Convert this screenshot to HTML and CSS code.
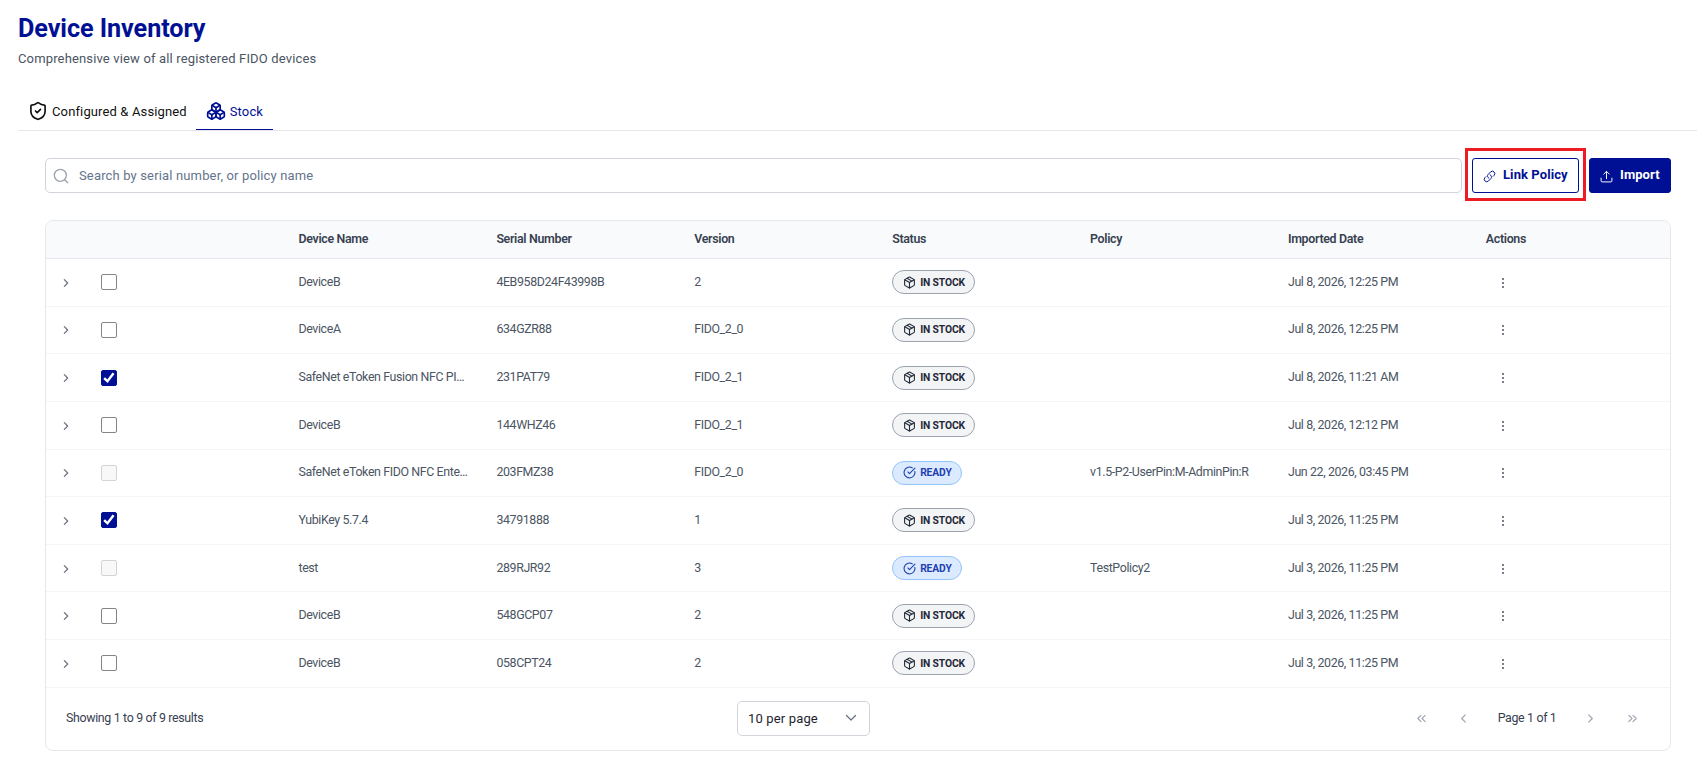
FILE: index.html
```html
<!DOCTYPE html>
<html lang="en">
<head>
<meta charset="utf-8">
<title>Device Inventory</title>
<link rel="stylesheet" href="styles.css">
</head>
<body>
<svg class="sprite" aria-hidden="true">
  <symbol id="i-shield" viewBox="0 0 24 24"><path d="M20.500 12.500c0 5.500-4 8-8.160 9.450a1 1 0 0 1-.670-.010C7.500 20.500 3.500 18 3.500 12.500V6a1 1 0 0 1 1-1C7 5 9.500 3.800 11.240 2.280a1.170 1.170 0 0 1 1.520 0C14.510 3.810 17 5 19.500 5a1 1 0 0 1 1 1z"/><path d="m9 12 2 2 4-4"/></symbol>
  <symbol id="i-boxes" viewBox="0 0 24 24"><path d="M2.970 12.920A2 2 0 0 0 2 14.630v3.240a2 2 0 0 0 .970 1.710l3 1.800a2 2 0 0 0 2.060 0L12 19v-5.500l-5-3-4.030 2.420Z"/><path d="m7 16.500-4.740-2.850"/><path d="m7 16.500 5-3"/><path d="M7 16.500v5.170"/><path d="M12 13.500V19l3.970 2.380a2 2 0 0 0 2.060 0l3-1.800a2 2 0 0 0 .970-1.710v-3.240a2 2 0 0 0-.970-1.710L17 10.500l-5 3Z"/><path d="m17 16.500-5-3"/><path d="m17 16.500 4.740-2.850"/><path d="M17 16.500v5.170"/><path d="M7.970 4.420A2 2 0 0 0 7 6.130v4.370l5 3 5-3V6.130a2 2 0 0 0-.970-1.710l-3-1.800a2 2 0 0 0-2.060 0l-3 1.800Z"/><path d="M12 8 7.260 5.150"/><path d="m12 8 4.740-2.850"/><path d="M12 13.500V8"/></symbol>
  <symbol id="i-search" viewBox="0 0 24 24"><circle cx="11" cy="11" r="9"/><path d="m22 22-4.500-4.500"/></symbol>
  <symbol id="i-link" viewBox="0 0 24 24"><path d="M13.190 8.690a4.500 4.500 0 0 1 1.240 7.240l-4.500 4.500a4.500 4.500 0 0 1-6.360-6.360l1.760-1.760m13.350-.620 1.760-1.760a4.500 4.500 0 0 0-6.370-6.360l-4.500 4.500a4.500 4.500 0 0 0 1.240 7.240"/></symbol>
  <symbol id="i-upload" viewBox="0 0 24 24"><path d="M2 15v5a2 2 0 0 0 2 2h16a2 2 0 0 0 2-2v-5"/><path d="M7 7.500 12 2.500l5 5"/><path d="M12 3v13"/></symbol>
  <symbol id="i-box" viewBox="0 0 24 24"><path d="M11 21.730a2 2 0 0 0 2 0l7-4A2 2 0 0 0 21 16V8a2 2 0 0 0-1-1.730l-7-4a2 2 0 0 0-2 0l-7 4A2 2 0 0 0 3 8v8a2 2 0 0 0 1 1.730z"/><path d="M12 22V12"/><path d="M3.290 7 12 12l8.710-5"/><path d="m7.500 4.270 9 5.150"/></symbol>
  <symbol id="i-ready" viewBox="0 0 24 24"><path d="M21.800 10A10 10 0 1 1 17 3.340"/><path d="m9 11 3 3L22 4"/></symbol>
  <symbol id="i-right" viewBox="0 0 12 12"><path d="m4 2 4 4-4 4"/></symbol>
  <symbol id="i-left" viewBox="0 0 12 12"><path d="M8 2 4 6l4 4"/></symbol>
  <symbol id="i-first" viewBox="0 0 12 12"><path d="M5.500 2.500 2 6l3.500 3.500M10 2.500 6.500 6 10 9.500"/></symbol>
  <symbol id="i-last" viewBox="0 0 12 12"><path d="M2 2.500 5.500 6 2 9.500M6.500 2.500 10 6 6.500 9.500"/></symbol>
  <symbol id="i-down" viewBox="0 0 12 12"><path d="m1.500 3.500 4.500 4.500 4.500-4.500"/></symbol>
  <symbol id="i-check" viewBox="0 0 14 14"><path d="m1.300 8 1.700-1.700 2.300 2.200 5.300-6.900 1.900 1.500-6.900 8.900z"/></symbol>
</svg>
<main class="page">
  <h1 class="title">Device Inventory</h1>
  <p class="subtitle">Comprehensive view of all registered FIDO devices</p>
  <nav class="tabs">
    <a class="tab"><svg class="icon tab-icon"><use href="#i-shield"/></svg>Configured &amp; Assigned</a>
    <a class="tab tab-active"><svg class="icon tab-icon"><use href="#i-boxes"/></svg>Stock</a>
  </nav>
  <section class="panel">
    <div class="toolbar">
      <div class="search"><svg class="icon search-icon"><use href="#i-search"/></svg>Search by serial number, or policy name</div>
      <div class="highlight"><button class="btn btn-outline"><svg class="icon btn-icon"><use href="#i-link"/></svg>Link Policy</button></div>
      <button class="btn btn-solid"><svg class="icon btn-icon"><use href="#i-upload"/></svg>Import</button>
    </div>
    <div class="table">
      <div class="row head"><span></span><span></span><span>Device Name</span><span>Serial Number</span><span>Version</span><span>Status</span><span>Policy</span><span>Imported Date</span><span>Actions</span></div>
      <div id="rows"></div>
      <div class="footer">
        <span class="summary">Showing 1 to 9 of 9 results</span>
        <div class="select">10 per page<svg class="icon select-icon"><use href="#i-down"/></svg></div>
        <div class="pager">
          <svg class="icon page-icon"><use href="#i-first"/></svg>
          <svg class="icon page-icon"><use href="#i-left"/></svg>
          <span class="page-label">Page 1 of 1</span>
          <svg class="icon page-icon"><use href="#i-right"/></svg>
          <svg class="icon page-icon"><use href="#i-last"/></svg>
        </div>
      </div>
    </div>
  </section>
</main>
<script src="rows.js"></script>
</body>
</html>
```
FILE: styles.css
```css
* { box-sizing: border-box; }
body { margin: 0; background: #fff; font-family: Roboto, sans-serif; color: #4b5563; }
.sprite { position: absolute; width: 0; height: 0; }
.icon { display: block; flex: none; fill: none; stroke: currentColor; stroke-width: 2; stroke-linecap: round; stroke-linejoin: round; }
.page { padding: 12px 5px 0 18px; }
.title { margin: 0; font-size: 25.2px; line-height: 33px; font-weight: 700; letter-spacing: -.07px; color: #001094; }
.subtitle { margin: 6px 0 0; font-size: 13px; line-height: 16px; letter-spacing: .15px; }
.tabs { display: flex; height: 40px; margin-top: 24px; border-bottom: 1px solid #e5e7eb; }
.tab { display: flex; align-items: center; gap: 4px; height: 39px; padding: 2px 10px 0; font-size: 13px; letter-spacing: .13px; color: #111; border-bottom: 1px solid transparent; }
.tab-icon { width: 20px; height: 20px; }
.tab-active { color: #001094; border-bottom-color: #001094; margin-left: -1px; }
.panel { padding: 27px 26px 0 27px; }
.toolbar { display: flex; height: 35px; align-items: flex-start; }
.search { flex: 1; display: flex; align-items: center; gap: 10px; height: 35px; padding-left: 7px; border: 1px solid #d1d5db; border-radius: 5px; font-size: 13px; letter-spacing: .15px; color: #64748b; }
.search-icon { width: 16px; height: 16px; color: #9ca3af; }
.highlight { margin: -10px 3px -8px; padding: 7px 4px 5px; border: 3px solid #ed1c24; }
.btn { display: flex; align-items: center; height: 35px; border: 1px solid #001094; border-radius: 3px; font: 700 13px Roboto, sans-serif; letter-spacing: .08px; padding: 0 10px 2px; gap: 7px; }
.btn-icon { width: 13px; height: 13px; margin-top: 3px; stroke-width: 1.8; }
.btn-outline { width: 107px; background: #fff; color: #001094; }
.btn-solid { width: 82px; background: #001094; color: #fff; }
.table { margin-top: 27px; border: 1px solid #e5e7eb; border-radius: 8px; overflow: hidden; height: 531px; }
.row { display: grid; grid-template-columns: 42.6px repeat(7, 197.9px) 1fr; height: 47.64px; align-items: center; border-bottom: 1px solid #f3f4f6; font-size: 12.4px; letter-spacing: -.38px; }
.row > * { padding-left: 12px; white-space: nowrap; }
.head { height: 38px; padding-bottom: 2px; background: #f9fafb; border-bottom-color: #e5e7eb; font-weight: 600; color: #374151; letter-spacing: -.32px; }
.text { padding-bottom: 2px; }
.chevron { width: 10px; height: 10px; box-sizing: content-box; margin: 1px 0 0 1px; padding-left: 14px; color: #6b7280; stroke-width: 1.5; }
.box { display: flex; width: 16px; height: 16px; border: 1px solid #858585; border-radius: 2px; background: #fff; }
.box-checked { background: #001094; border-color: #001094; color: #fff; }
.box-disabled { background: #f8f8f8; border-color: #d4d4d4; }
.check { width: 14px; height: 14px; fill: currentColor; stroke: none; }
.badge { display: inline-flex; align-items: center; gap: 4px; height: 24px; padding: 0 9.5px 0 10px; border: 1px solid #9ca3af; border-radius: 12px; background: #f3f4f6; color: #1f2937; font-size: 10.3px; font-weight: 700; letter-spacing: -.13px; vertical-align: middle; }
.badge-ready { background: #dbeafe; border-color: #93c5fd; color: #1e40af; }
.badge-icon { width: 13px; height: 13px; }
.kebab { display: grid; gap: 2px; width: 2px; margin: 1px 0 0 16px; }
.kebab i { width: 2px; height: 2px; border-radius: 50%; background: #4b5563; }
.footer { display: flex; align-items: center; height: 61px; padding: 0 32px 0 20px; font-size: 12.4px; letter-spacing: -.34px; color: #374151; }
.summary { width: 671px; padding-bottom: 1px; }
.select { display: flex; align-items: center; justify-content: space-between; width: 133px; height: 35px; padding: 0 12px 0 10px; border: 1px solid #d1d5db; border-radius: 5px; font-size: 13px; letter-spacing: .15px; color: #1e1e2f; }
.select-icon { width: 12px; height: 12px; color: #6b7280; stroke-width: 1.3; }
.pager { display: flex; align-items: center; margin-left: auto; gap: 31px; color: #9ca3af; }
.page-icon { width: 11px; height: 11px; stroke-width: 1.2; }
.page-label { color: #374151; margin: 0 -2.5px; padding-bottom: 1px; }
```
FILE: rows.js
```js
const devices = [
  ["DeviceB", "4EB958D24F43998B", "2", "", "Jul 8, 2026, 12:25 PM", ""],
  ["DeviceA", "634GZR88", "FIDO_2_0", "", "Jul 8, 2026, 12:25 PM", ""],
  ["SafeNet eToken Fusion NFC PI…", "231PAT79", "FIDO_2_1", "", "Jul 8, 2026, 11:21 AM", "checked"],
  ["DeviceB", "144WHZ46", "FIDO_2_1", "", "Jul 8, 2026, 12:12 PM", ""],
  ["SafeNet eToken FIDO NFC Ente…", "203FMZ38", "FIDO_2_0", "v1.5-P2-UserPin:M-AdminPin:R", "Jun 22, 2026, 03:45 PM", "disabled"],
  ["YubiKey 5.7.4", "34791888", "1", "", "Jul 3, 2026, 11:25 PM", "checked"],
  ["test", "289RJR92", "3", "TestPolicy2", "Jul 3, 2026, 11:25 PM", "disabled"],
  ["DeviceB", "548GCP07", "2", "", "Jul 3, 2026, 11:25 PM", ""],
  ["DeviceB", "058CPT24", "2", "", "Jul 3, 2026, 11:25 PM", ""],
];
const icon = (id, cls) => `<svg class="icon ${cls}"><use href="#i-${id}"/></svg>`;
document.getElementById("rows").innerHTML = devices.map(([name, serial, version, policy, date, state]) => `
  <div class="row">
    ${icon("right", "chevron")}
    <span><span class="box ${state && "box-" + state}">${state === "checked" ? icon("check", "check") : ""}</span></span>
    <span class="text">${name}</span><span class="text">${serial}</span><span class="text">${version}</span>
    <span>${policy ? `<span class="badge badge-ready">${icon("ready", "badge-icon")}READY</span>` : `<span class="badge">${icon("box", "badge-icon")}IN STOCK</span>`}</span>
    <span class="text">${policy}</span><span class="text">${date}</span>
    <span><span class="kebab"><i></i><i></i><i></i></span></span>
  </div>`).join("");
```
